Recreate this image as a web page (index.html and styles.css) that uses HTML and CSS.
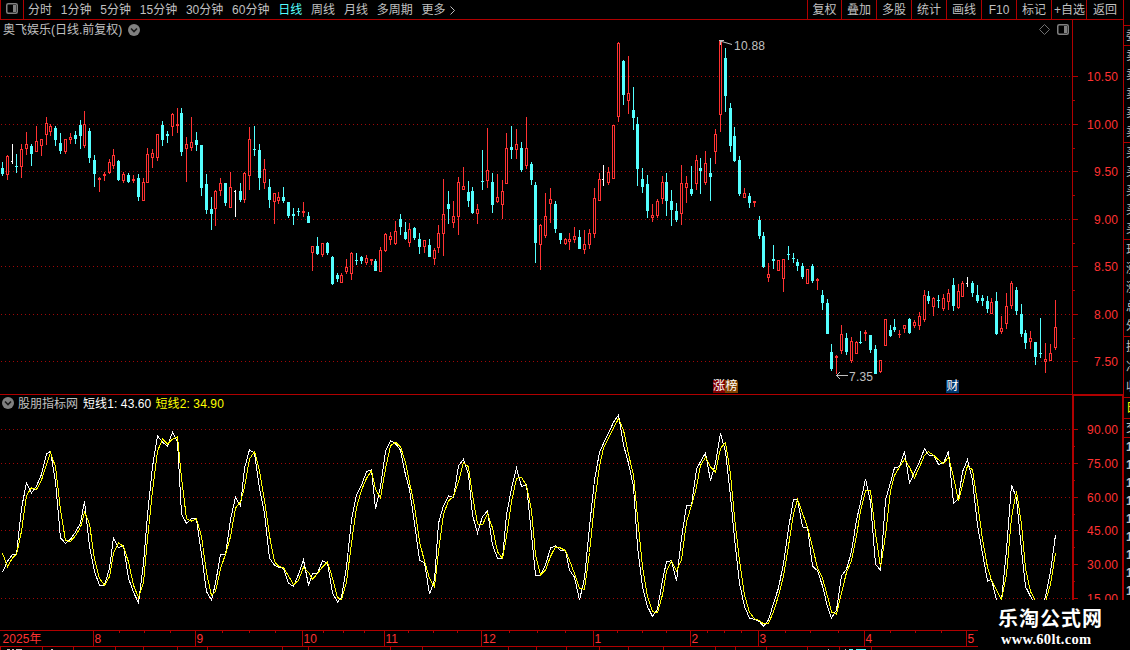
FILE: index.html
```html
<!DOCTYPE html>
<html lang="zh-CN">
<head>
<meta charset="utf-8">
<title>奥飞娱乐</title>
<link rel="stylesheet" href="styles.css">
</head>
<body>
<div class="app">
  <div class="workspace">
    <header class="toolbar">
      <div class="layout-toggle">
        <svg width="12" height="11" viewBox="0 0 12 11"><rect x=".75" y=".75" width="10.5" height="9.5" rx="1.5" class="icon-line"/><rect x="7" y="2" width="3" height="7" class="icon-fill"/></svg>
      </div>
      <nav class="periods">
        <span>分时</span><span>1分钟</span><span>5分钟</span><span>15分钟</span><span>30分钟</span><span>60分钟</span><span class="active">日线</span><span>周线</span><span>月线</span><span>多周期</span><span class="more">更多<svg width="6" height="9" viewBox="0 0 6 9"><path d="M.5 .5L4.5 4.5L.5 8.5" class="arrow"/></svg></span>
      </nav>
      <nav class="actions">
        <span>复权</span><span>叠加</span><span>多股</span><span>统计</span><span>画线</span><span>F10</span><span>标记</span><span class="watch">+自选</span><span class="back">返回</span>
      </nav>
    </header>

    <section class="panel price">
      <svg id="price" width="1123" height="375" viewBox="0 20 1123 375"></svg>
      <div class="title">奥飞娱乐(日线.前复权)
        <svg width="12" height="12" viewBox="0 0 12 12"><circle cx="6" cy="6" r="6" class="icon-fill"/><path d="M3 4.5L6 7.5L9 4.5" class="chevron"/></svg>
      </div>
      <div class="panel-tools">
        <svg width="11" height="11" viewBox="0 0 11 11"><path d="M5.5 .5L10.5 5.5L5.5 10.5L.5 5.5Z" class="diamond"/></svg>
        <svg width="12" height="11" viewBox="0 0 12 11"><rect x=".75" y=".75" width="10.5" height="9.5" rx="1.5" class="icon-line"/><rect x="7" y="2" width="3" height="7" class="icon-fill"/></svg>
      </div>
      <div class="tag-pair"><span class="tag rise">涨</span><span class="tag rank">榜</span></div>
      <span class="tag finance">财</span>
    </section>

    <section class="panel oscillator">
      <svg id="osc" width="1123" height="235" viewBox="0 395 1123 235"></svg>
      <div class="legend">
        <svg width="12" height="12" viewBox="0 0 12 12"><circle cx="6" cy="6" r="6" class="icon-fill"/><path d="M3 4.5L6 7.5L9 4.5" class="chevron"/></svg>
        <span class="name">股朋指标网</span><span class="fast">短线1: 43.60</span><span class="slow">短线2: 34.90</span>
      </div>
    </section>

    <svg id="timeline" width="1123" height="20" viewBox="0 630 1123 20"></svg>
  </div>

  <aside class="quotes">
    <div class="cell blank"></div>
    <div class="cell entrust"><span>委</span></div>
    <div class="cell five"><span>卖</span><span>卖</span><span>卖</span><span>卖</span><span>卖</span></div>
    <div class="cell five"><span>买</span><span>买</span><span>买</span><span>买</span><span>买</span></div>
    <div class="cell five"><span>现</span><span>涨</span><span>涨</span><span>总</span><span>外</span></div>
    <div class="cell three"><span>换</span><span>净</span><span>收</span></div>
    <div class="cell tab"><span>日</span></div>
    <div class="cell deal"><span>交</span></div>
    <div class="cell ticks"><span>1</span><span>1</span><span>1</span><span>1</span><span>1</span><span>1</span><span>1</span><span>1</span><span>1</span></div>
  </aside>

  <div class="brand">
    <svg width="152" height="50" viewBox="978 600 152 50">
      <text x="998" y="626" textLength="104" class="brand-name">乐淘公式网</text>
      <text x="1001" y="644" textLength="90" class="brand-url">www.60lt.com</text>
    </svg>
  </div>
</div>
<script src="chart.js"></script>
</body>
</html>
```

FILE: styles.css
```css
* { box-sizing: border-box; }
body {
  margin: 0;
  background: #000;
  color: #c0c0c0;
  font: 12px/18px "Liberation Sans", "Noto Sans CJK SC", sans-serif;
}
.app { position: relative; display: flex; width: 1130px; height: 650px; overflow: hidden; }
.workspace { width: 1123px; flex: none; display: flex; flex-direction: column; }
svg { display: block; flex: none; }

.toolbar { height: 20px; display: flex; border-bottom: 1px solid #b00000; }
.layout-toggle { width: 24px; padding: 3px 0 0 5px; border: solid #b00000; border-width: 0 1px; }
.periods { display: flex; gap: 8.8px; padding: 1px 0 0 4px; white-space: nowrap; flex: 1; }
.active { color: #54ffff; }
.more { display: flex; align-items: center; gap: 4px; }
.actions { display: flex; white-space: nowrap; }
.actions span { width: 35px; height: 19px; line-height: 20px; border-left: 1px solid #b00000; text-align: center; }
.actions span:first-child { width: 34px; }
.actions .watch { padding-left: 1px; }
.actions .back { width: 37px; }

.icon-line { fill: none; stroke: #808080; stroke-width: 1.5; }
.icon-fill { fill: #808080; }
.arrow { fill: none; stroke: #c0c0c0; }
.diamond { fill: none; stroke: #707070; }
.chevron { fill: none; stroke: #181818; stroke-width: 1.6; }

.panel { position: relative; }
.price { height: 375px; }
.oscillator { height: 235px; }
.title, .legend { position: absolute; display: flex; align-items: center; white-space: nowrap; }
.title { left: 3px; top: 1px; gap: 6px; }
.title svg { margin-top: -1px; }
.legend { left: 2px; top: 0; gap: 4px; }
.legend svg { margin-top: -2px; }
.name { margin-right: 1px; }
.fast { color: #fff; letter-spacing: .1px; }
.slow { color: #ff0; letter-spacing: .12px; }
.panel-tools { position: absolute; left: 1039px; top: 4px; display: flex; gap: 7px; }
.tag-pair { position: absolute; left: 713px; top: 360px; display: flex; }
.tag { width: 13px; height: 13px; line-height: 13px; color: #fff; text-align: center; display: block; }
.rise { background: #800000; width: 12px; }
.rank { background: #804000; border-top-right-radius: 3px; }
.finance { position: absolute; left: 946px; top: 360px; background: #003870; }

.red { fill: #b00000; }
.dot { fill: #a00808; }
.up { fill: #ff3232; }
.down { fill: #54ffff; }
.flat { fill: #fff; }
.axis { fill: #ff3232; font-size: 12px; }
.note { fill: #c0c0c0; font-size: 12px; }
.pointer { fill: none; stroke: #c0c0c0; }
.line { fill: none; stroke-width: 1; }
.line.w { stroke: #fff; }
.line.y { stroke: #ff0; }
.grey { fill: #c0c0c0; }

.quotes { width: 7px; height: 600px; flex: none; overflow: hidden; border-left: 1px solid #b00000; }
.cell { border-bottom: 1px solid #b00000; padding-left: 2px; display: flex; flex-direction: column; justify-content: space-around; overflow: hidden; }
.cell span { display: block; width: 14px; line-height: 14px; }
.blank { height: 26px; }
.entrust { height: 20px; }
.five { height: 97px; }
.three { height: 61px; }
.tab { height: 21px; color: #ff0; }
.deal { height: 19px; }
.ticks { border: 0; justify-content: flex-start; }
.ticks span { line-height: 18px; font-weight: bold; }

.brand { position: absolute; left: 978px; top: 600px; background: #000; }
.brand-name { fill: #fff; font: bold 20px "Noto Sans CJK SC", sans-serif; }
.brand-url { fill: #fff; font: bold 14.5px "Liberation Serif", serif; }
```

FILE: chart.js
```js
const NS = 'http://www.w3.org/2000/svg';
function add(svg, tag, cls, attrs, text) {
  const el = document.createElementNS(NS, tag);
  el.setAttribute('class', cls);
  for (const k in attrs) el.setAttribute(k, attrs[k]);
  if (text) el.textContent = text;
  svg.appendChild(el);
}
function box(svg, cls, x, y, width, height) {
  add(svg, 'rect', cls, { x, y, width, height, 'shape-rendering': 'crispEdges' });
}

/* Bars are five pixels apart, four at the indexes listed here. */
const narrow = new Set([3,10,17,23,30,37,44,50,57,64,70,77,84,90,97,104,110,117,124,131,137,144,151,157,164,171,177,184,191,198,204,211]);
const xs = [2];
for (let i = 1; i < 218; i++) xs.push(xs[i - 1] + (narrow.has(i) ? 4 : 5));

/* kind, high, body top, body bottom, low; in thirds of a pixel below each block's base. */
const blocks = [
[90, `c 216 234 252 258,r 195 198 255 270,w 162 213 216 222,c 192 228 231 249,r 162 177 231 264,r 126 162 177 195,c 162 168 192 228,r 108 153 186 186,r 147 147 168 198,r 81 99 135 165,r 102 108 126 138,c 108 114 150 168,c 129 159 183 192,r 147 147 186 192,r 129 141 150 162,c 123 135 147 162,c 90 105 138 177,r 63 102 168 174,c 114 123 204 219,c 195 210 252 291,r 261 264 270 306,r 246 252 258 273,r 207 216 249 252,r 177 195 228 237,c 210 213 270 273,r 246 252 273 279,c 249 255 276 279,r 255 267 273 279,c 252 264 321 333,r 264 276 333 333,r 174 192 279 279,r 177 189 204 234,r 132 132 204 213,c 93 105 150 168,c 123 132 138 159,r 69 72 111 138,r 54 102 108 129,c 54 69 186 198,r 141 162 177 276,r 81 156 174 183,c 126 150 165 183,c 165 165 294 318`],
[100, `c 222 252 330 342,c 291 327 342 390,r 270 273 327 378,r 234 249 273 288,c 249 249 309 318,r 216 261 324 324,w 270 273 276 351,c 249 273 300 306,r 216 219 300 309,r 81 117 228 270,c 78 147 150 168,c 132 150 234 270,r 177 207 249 267,c 237 261 300 324,r 279 279 306 372,r 276 291 303 312,c 261 291 303 309,c 306 306 348 354,c 324 342 348 375,c 324 333 336 348,r 306 333 339 351,c 336 348 369 369,r 438 438 459 513,c 411 438 462 465,r 429 429 465 471,c 426 429 459 465,c 468 471 552 555,c 519 525 537 546,r 519 525 549 549,r 477 501 516 522,r 456 459 522 540,c 459 480 483 495,c 468 471 483 492,r 465 474 489 495,r 477 477 483 495,c 477 483 513 513,r 441 450 516 516,r 399 402 453 456,r 396 408 420 435,r 363 393 432 435,c 342 357 381 405,c 366 396 417 420,r 369 387 429 441,c 381 384 414 420,c 399 417 441 462,r 420 420 441 459,c 417 435 471 471,r 444 450 477 495,r 375 399 444 459,r 237 342 402 468,c 273 312 327 372,r 303 348 369 384,r 231 246 351 405,r 201 258 270 270,c 243 276 303 321,c 261 273 339 342,r 312 327 342 372,c 150 243 246 270,r 84 210 243 264,c 219 246 315 339,r 222 291 306 309,r 240 273 315 357,r 99 144 252 252,c 78 141 150 177,r 87 132 150 177,c 126 144 210 216,r 51 144 198 207,c 186 192 240 255,c 246 255 429 489,r 372 375 435 510,r 279 348 408 414,r 264 297 312 369,c 303 312 387 399,c 399 399 420 432,r 414 417 432 435,r 399 417 426 450,r 381 408 420 429,c 390 411 447 447,r 390 432 450 462,r 387 399 435 447,r 264 294 402 414,r 219 237 303 303,w 195 237 240 258,r 201 216 249 255,r 75 75 237 237`],
[30, `r 36 39 261 276,c 90 93 195 225,r 78 189 213 252,c 171 240 264 300,c 261 282 417 468,c 414 447 471 489,c 435 462 543 564,r 522 555 564 576,r 507 513 558 564,r 438 456 507 522,c 429 456 513 558,c 480 513 540 588,c 519 543 570 576,r 405 459 552 585,r 438 459 474 519,c 408 477 492 498,r 375 390 462 480,c 384 414 423 492,r 363 399 459 465,c 384 429 441 513,r 297 312 366 402,r 30 30 255 306,c 54 84 198 246,c 219 234 348 366,c 291 318 393 396,c 378 390 492 498,r 474 489 504 504,c 489 498 519 534,r 513 513 519 531,c 558 570 618 627,c 606 618 711 714,r 699 732 744 756,c 645 687 693 717,r 690 690 723 723,r 687 687 747 786,c 648 672 675 690,c 669 684 687 699,c 687 696 708 723,c 699 708 741 747,r 717 717 762 762,c 702 708 753 759,r 744 747 753 780,c 780 795 819 840,c 807 819 912 912,c 942 966 1017 1023,r 975 978 984 1032,r 885 912 963 972,c 909 924 966 975,r 921 933 993 999,r 933 936 972 972,c 903 936 939 942,r 900 906 912 933,c 915 915 960 969,c 945 957 1032 1032,r 990 990 1026 1029`],
[260, `r 177 177 258 258,c 195 210 228 231,c 177 201 210 216,r 210 222 225 234,r 195 195 207 219,c 174 177 219 222,r 180 186 198 204,r 156 168 198 210,r 90 105 180 186,c 93 108 123 132,r 111 114 141 168,c 105 120 123 144,r 102 114 147 153,r 87 99 126 150,c 54 75 138 153,r 72 93 144 147,r 63 69 111 111,w 51 69 72 81,c 63 69 99 111,c 75 105 123 129,c 105 114 123 138,c 108 123 147 159,r 114 126 162 162,c 96 123 222 225,r 168 204 216 222,r 99 138 192 207,r 63 69 138 147,c 81 90 153 165,c 132 162 222 231,c 210 219 249 267,r 213 234 246 267,c 246 246 291 315,c 174 279 282 294,r 249 297 306 339,r 252 279 303 303,r 120 201 264 270`]
];

const price = document.getElementById('price');
const osc = document.getElementById('osc');
const timeline = document.getElementById('timeline');

function scale(svg, rows, mids) {
  for (const [y, label] of rows) {
    for (let x = 1; x < 1072; x += 4) box(svg, 'dot', x, y, 1, 1);
    box(svg, 'red', 1073, y, 5, 1);
    add(svg, 'text', 'axis', { x: 1118, y: y + 5, 'text-anchor': 'end', textLength: label.length === 5 ? 31 : 24 }, label);
  }
  for (const y of mids) box(svg, 'red', 1073, y, 2, 1);
}

scale(price, [[76,'10.50'],[124,'10.00'],[171,'9.50'],[219,'9.00'],[266,'8.50'],[314,'8.00'],[361,'7.50']], [100,148,195,243,290,338]);
box(price, 'red', 0, 394, 1123, 1);
box(price, 'red', 1072, 20, 1, 375);

let n = 0;
for (const [base, rows] of blocks) {
  for (const row of rows.split(',')) {
    const [kind, ...v] = row.split(' ');
    const [high, top, bottom, low] = v.map(t => base + Math.round(t / 3));
    const x = xs[n++];
    if (kind === 'r') {
      box(price, 'up', x, high, 1, top - high);
      box(price, 'up', x, bottom, 1, low - bottom);
      box(price, 'up', x - 1, top, 3, 1);
      box(price, 'up', x - 1, bottom - 1, 3, 1);
      box(price, 'up', x - 1, top, 1, bottom - top);
      box(price, 'up', x + 1, top, 1, bottom - top);
    } else {
      const cls = kind === 'c' ? 'down' : 'flat';
      box(price, cls, x, high, 1, low - high);
      box(price, cls, x - 1, top, kind === 'c' ? 3 : 2, bottom - top);
    }
  }
}
add(price, 'path', 'pointer', { d: 'M720 41L732 44.5M720.5 45V40.5M719 40.5H724' });
add(price, 'text', 'note', { x: 734, y: 50, textLength: 31 }, '10.88');
add(price, 'path', 'pointer', { d: 'M836 375.5H848M840 372L836.5 375.5L840 379' });
add(price, 'text', 'note', { x: 849, y: 381, textLength: 24 }, '7.35');

scale(osc, [[429,'90.00'],[463,'75.00'],[497,'60.00'],[530,'45.00'],[564,'30.00'],[598,'15.00']], [446,480,514,547,581]);
box(osc, 'red', 1072, 395, 2, 235);
box(osc, 'red', 1072, 395, 51, 1);
box(osc, 'red', 1122, 395, 1, 235);

/* Fast line, in thirds of a pixel below y = 390; the slow line is its two-bar mean. */
const fast = [547,513,494,493,355,278,309,288,253,192,184,275,444,460,448,426,399,333,470,545,586,586,535,443,473,467,565,607,638,520,375,230,137,157,168,127,155,372,400,386,387,492,605,630,580,493,493,388,322,348,235,179,190,295,370,505,525,532,535,580,589,553,510,585,551,550,512,520,609,636,622,530,390,315,285,245,239,357,290,183,152,161,180,255,298,400,510,518,612,570,400,347,317,323,228,207,255,375,429,380,362,465,505,505,375,295,235,289,285,435,556,555,525,474,467,481,482,540,562,630,565,410,270,187,160,130,97,75,165,220,290,470,590,650,679,658,570,515,512,573,445,347,346,237,215,189,272,220,130,185,320,445,580,650,684,688,695,709,690,640,594,520,415,328,328,411,412,528,542,588,650,684,660,557,538,485,390,338,266,335,523,541,330,278,233,230,184,280,247,215,176,195,196,223,219,184,340,325,245,209,270,405,490,573,568,630,630,480,284,325,480,590,619,645,650,620,545,435];
const slow = fast.map((v, i) => i ? (v + fast[i - 1]) / 2 : 490);
const points = list => list.map((v, i) => (xs[i] + 0.5) + ',' + (390 + v / 3).toFixed(1)).join(' ');
add(osc, 'polyline', 'line w', { points: points(fast), 'shape-rendering': 'crispEdges' });
add(osc, 'polyline', 'line y', { points: points(slow), 'shape-rendering': 'crispEdges' });

box(timeline, 'red', 0, 630, 1123, 1);
box(timeline, 'red', 0, 646, 1123, 1);
for (const [x, label] of [[93,'8'],[195,'9'],[302,'10'],[384,'11'],[481,'12'],[593,'1'],[690,'2'],[758,'3'],[864,'4'],[966,'5']]) {
  box(timeline, 'red', x, 631, 1, 15);
  add(timeline, 'text', 'axis', { x: x + 1.5, y: 643 }, label);
}
add(timeline, 'text', 'axis', { x: 2.5, y: 643, textLength: 39 }, '2025年');
for (const x of [119,144,170,222,249,275,323,343,364,408,433,457,509,537,565,617,642,666,707,724,741,785,810,838,890,915,941]) box(timeline, 'red', x, 631, 1, 2);
for (const x of [0,42,73,115,143,177,207,282,308,390,422,508,536,566,599,628,663,715,735,766,807,839,871]) box(timeline, 'red', x, 647, 1, 3);
for (const [x, w] of [[7,3],[12,2],[16,6],[51,2],[828,1],[845,1]]) box(timeline, 'grey', x, 649, w, 1);
for (const [x, w] of [[849,4],[856,10]]) box(timeline, 'down', x, 649, w, 1);
```
